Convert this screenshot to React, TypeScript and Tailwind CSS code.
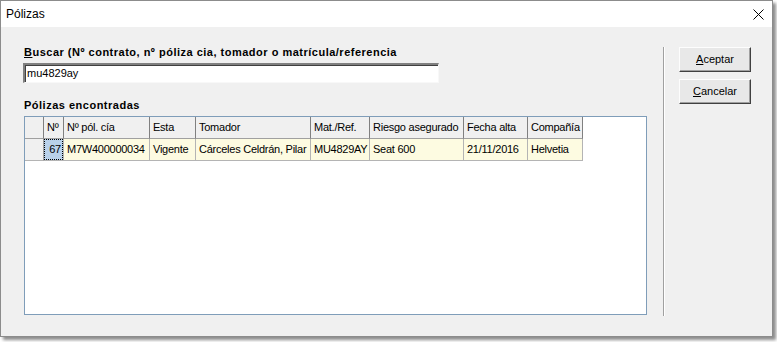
const COLS = [
  { key: "num", label: "Nº", w: 20 },
  { key: "pol", label: "Nº pól. cía", w: 86 },
  { key: "esta", label: "Esta", w: 46 },
  { key: "tomador", label: "Tomador", w: 115 },
  { key: "mat", label: "Mat./Ref.", w: 59 },
  { key: "riesgo", label: "Riesgo asegurado", w: 94 },
  { key: "fecha", label: "Fecha alta", w: 64 },
  { key: "cia", label: "Compañía", w: 55 },
];

const ROWS: Record<string, string>[] = [
  {
    num: "67",
    pol: "M7W400000034",
    esta: "Vigente",
    tomador: "Cárceles Celdrán, Pilar",
    mat: "MU4829AY",
    riesgo: "Seat 600",
    fecha: "21/11/2016",
    cia: "Helvetia",
  },
];

const font = { fontFamily: '"Liberation Sans", Arial, sans-serif' };

const WinButton = ({ hot, rest }: { hot: string; rest: string }) => (
  <button className="w-[72px] h-[25px] bg-[#e8e8e8] border border-t-[#fdfdfd] border-l-[#fdfdfd] border-r-[#404040] border-b-[#404040] shadow-[inset_-1px_-1px_0_#a0a0a0] text-[11px] text-black leading-none">
    <span className="underline">{hot}</span>
    {rest}
  </button>
);

export default function App() {
  return (
    <div className="w-[777px] h-[342px] bg-white" style={font}>
      <div className="w-[773px] h-[337px] border border-[#8c8c8c] bg-[#f0f0f0] flex flex-col shadow-[3px_3px_3px_rgba(0,0,0,0.45)]">
        {/* Title bar */}
        <div className="h-[26px] bg-white flex items-center justify-between pl-[5px] pr-[7px]">
          <span className="text-[12px] text-black">Pólizas</span>
          <svg width="11" height="11" viewBox="0 0 11 11" className="mr-[1px]">
            <path d="M0.5 0.5L10.5 10.5M10.5 0.5L0.5 10.5" stroke="#000" strokeWidth="1" fill="none" />
          </svg>
        </div>

        {/* Body */}
        <div className="flex-1 flex pl-[22px] pt-[18px]">
          <div className="w-[624px] flex flex-col">
            <label className="text-[11px] font-bold leading-[14px] tracking-[0.5px] text-black pl-[1px]">
              <span className="underline">B</span>uscar (Nº contrato, nº póliza cia, tomador o matrícula/referencia
            </label>
            <div className="mt-[4px] w-[416px] h-[20px] bg-white border-t-2 border-l-2 border-t-[#808080] border-l-[#808080] border-b border-r border-b-[#f8f8f8] border-r-[#f8f8f8] shadow-[inset_1px_1px_0_#404040] flex items-center pl-[2px]">
              <span className="text-[11px] text-black">mu4829ay</span>
            </div>
            <div className="mt-[15px] pl-[1px] text-[11px] font-bold leading-[14px] tracking-[0.5px] text-black">
              Pólizas encontradas
            </div>

            {/* Grid */}
            <div className="mt-[4px] ml-[1px] h-[199px] bg-white border border-[#7f9db9] text-[11px] tracking-[-0.25px] text-black">
              <div className="flex h-[22px]">
                <div className="w-[19px] bg-[#f0f0f0] border-r border-b border-r-[#808080] border-b-[#a0a0a0]" />
                {COLS.map((c) => (
                  <div
                    key={c.key}
                    className="bg-[#f0f0f0] border-r border-b border-r-[#808080] border-b-[#a0a0a0] flex items-center pl-[3px] whitespace-nowrap overflow-hidden"
                    style={{ width: c.w }}
                  >
                    {c.label}
                  </div>
                ))}
              </div>
              {ROWS.map((r, i) => (
                <div key={i} className="flex h-[22px]">
                  <div className="w-[19px] bg-[#f0f0f0] border-r border-b border-r-[#a0a0a0] border-b-[#b4b4b4]" />
                  {COLS.map((c, j) =>
                    j === 0 ? (
                      <div
                        key={c.key}
                        className="bg-[#b9d1ea] border-r border-b border-r-[#b4b4b4] border-b-[#b4b4b4]"
                        style={{ width: c.w }}
                      >
                        <div className="w-full h-full border border-dotted border-black flex items-center justify-end pr-[1px]">
                          {r[c.key]}
                        </div>
                      </div>
                    ) : (
                      <div
                        key={c.key}
                        className="bg-[#fdfbe1] border-r border-b border-r-[#b4b4b4] border-b-[#b4b4b4] flex items-center pl-[3px] whitespace-nowrap overflow-hidden"
                        style={{ width: c.w }}
                      >
                        {r[c.key]}
                      </div>
                    ),
                  )}
                </div>
              ))}
            </div>
          </div>

          {/* Separator */}
          <div className="ml-[16px] mt-[2px] w-[2px] h-[269px] border-l border-l-[#a0a0a0] border-r border-r-white" />

          {/* Buttons */}
          <div className="ml-[14px] mt-[2px] flex flex-col gap-[7px]">
            <WinButton hot="A" rest="ceptar" />
            <WinButton hot="C" rest="ancelar" />
          </div>
        </div>
      </div>
    </div>
  );
}
